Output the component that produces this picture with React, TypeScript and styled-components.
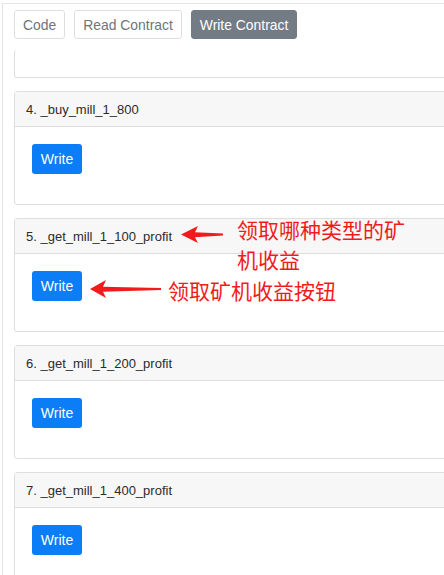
import React from "react";
import styled, { createGlobalStyle } from "styled-components";

const Global = createGlobalStyle`
  html, body { margin: 0; padding: 0; background: #fff; overflow: hidden; }
  body { font-family: "Liberation Sans", Arial, sans-serif; }
  #root { width: 444px; height: 575px; overflow: hidden; }
`;

const Page = styled.div`
  margin: 3px 0 0 2px;
  width: 480px;
  border-top: 1px solid #e3e3e3;
  border-left: 1px solid #e3e3e3;
  padding: 6px 0 0 11px;
  box-sizing: border-box;
  height: 600px;
`;

const Tabs = styled.div`
  display: flex;
  gap: 9px;
  margin-bottom: 11px;
`;

const Tab = styled.button<{ $active?: boolean }>`
  height: 29px;
  padding: 0 8px;
  font-family: "Liberation Sans", Arial, sans-serif;
  font-size: 13.9px;
  border-radius: 3px;
  border: 1px solid ${(p) => (p.$active ? "#737b84" : "#dcdfe2")};
  background: ${(p) => (p.$active ? "#737b84" : "#fff")};
  color: ${(p) => (p.$active ? "#fff" : "#6c757d")};
  cursor: pointer;
`;

const List = styled.div`
  display: flex;
  flex-direction: column;
  gap: 13px;
`;

const Card = styled.div<{ $partial?: boolean }>`
  position: relative;
  border: 1px solid #dedede;
  border-top: ${(p) => (p.$partial ? "none" : "1px solid #dedede")};
  border-radius: 3px;
  height: ${(p) => (p.$partial ? "28px" : "114px")};
  box-sizing: border-box;
  background: #fff;
`;

const Header = styled.div`
  height: 35px;
  box-sizing: border-box;
  border-bottom: 1px solid #dedede;
  background: #f7f7f7;
  padding: 0 11px;
  display: flex;
  align-items: center;
  font-size: 13px;
  color: #2b2b2b;
`;

const Body = styled.div`
  padding: 17px 17px;
`;

const WriteButton = styled.button`
  width: 50px;
  height: 30px;
  border: none;
  border-radius: 3px;
  background: #0a7df7;
  color: #fff;
  font-family: "Liberation Sans", Arial, sans-serif;
  font-size: 14px;
  padding: 0;
`;

const Annotation = styled.div<{ $gap: number }>`
  position: absolute;
  display: flex;
  align-items: flex-start;
  gap: ${(p) => p.$gap}px;
  pointer-events: none;
`;

const Note = styled.div<{ $w: number }>`
  width: ${(p) => p.$w}px;
  font-family: "Noto Sans CJK SC", "Microsoft YaHei", sans-serif;
  font-size: 21px;
  line-height: 30px;
  color: #f01c1c;
  word-break: break-all;
`;

const ArrowSvg = styled.svg<{ $mt: number }>`
  flex: none;
  margin-top: ${(p) => p.$mt}px;
  overflow: visible;
`;

const RedArrow = ({ len, headLen, headH, mt }: { len: number; headLen: number; headH: number; mt: number }) => {
  const h = headH / 2;
  return (
    <ArrowSvg $mt={mt} width={len} height={headH} viewBox={`0 0 ${len} ${headH}`}>
      <path
        d={`M0 ${h} L${headLen} 0 L${headLen - 3} ${h - 2.2} L${len} ${h - 1} L${len} ${h + 1} L${headLen - 3} ${h + 2.8} L${headLen} ${headH} Z`}
        fill="#f21b1b"
      />
    </ArrowSvg>
  );
};

const items = [
  "4. _buy_mill_1_800",
  "5. _get_mill_1_100_profit",
  "6. _get_mill_1_200_profit",
  "7. _get_mill_1_400_profit",
];

export default function App() {
  return (
    <>
      <Global />
      <Page>
        <Tabs>
          <Tab>Code</Tab>
          <Tab>Read Contract</Tab>
          <Tab $active>Write Contract</Tab>
        </Tabs>
        <List>
          <Card $partial />
          {items.map((name, i) => (
            <Card key={name}>
              <Header>{name}</Header>
              <Body>
                <WriteButton>Write</WriteButton>
              </Body>
              {i === 1 && (
                <>
                  <Annotation $gap={14} style={{ left: 166, top: -5 }}>
                    <RedArrow len={42} headLen={17} headH={17} mt={12} />
                    <Note $w={172}>领取哪种类型的矿机收益</Note>
                  </Annotation>
                  <Annotation $gap={7} style={{ left: 75, top: 56 }}>
                    <RedArrow len={71} headLen={16} headH={18} mt={5} />
                    <Note $w={200}>领取矿机收益按钮</Note>
                  </Annotation>
                </>
              )}
            </Card>
          ))}
        </List>
      </Page>
    </>
  );
}
